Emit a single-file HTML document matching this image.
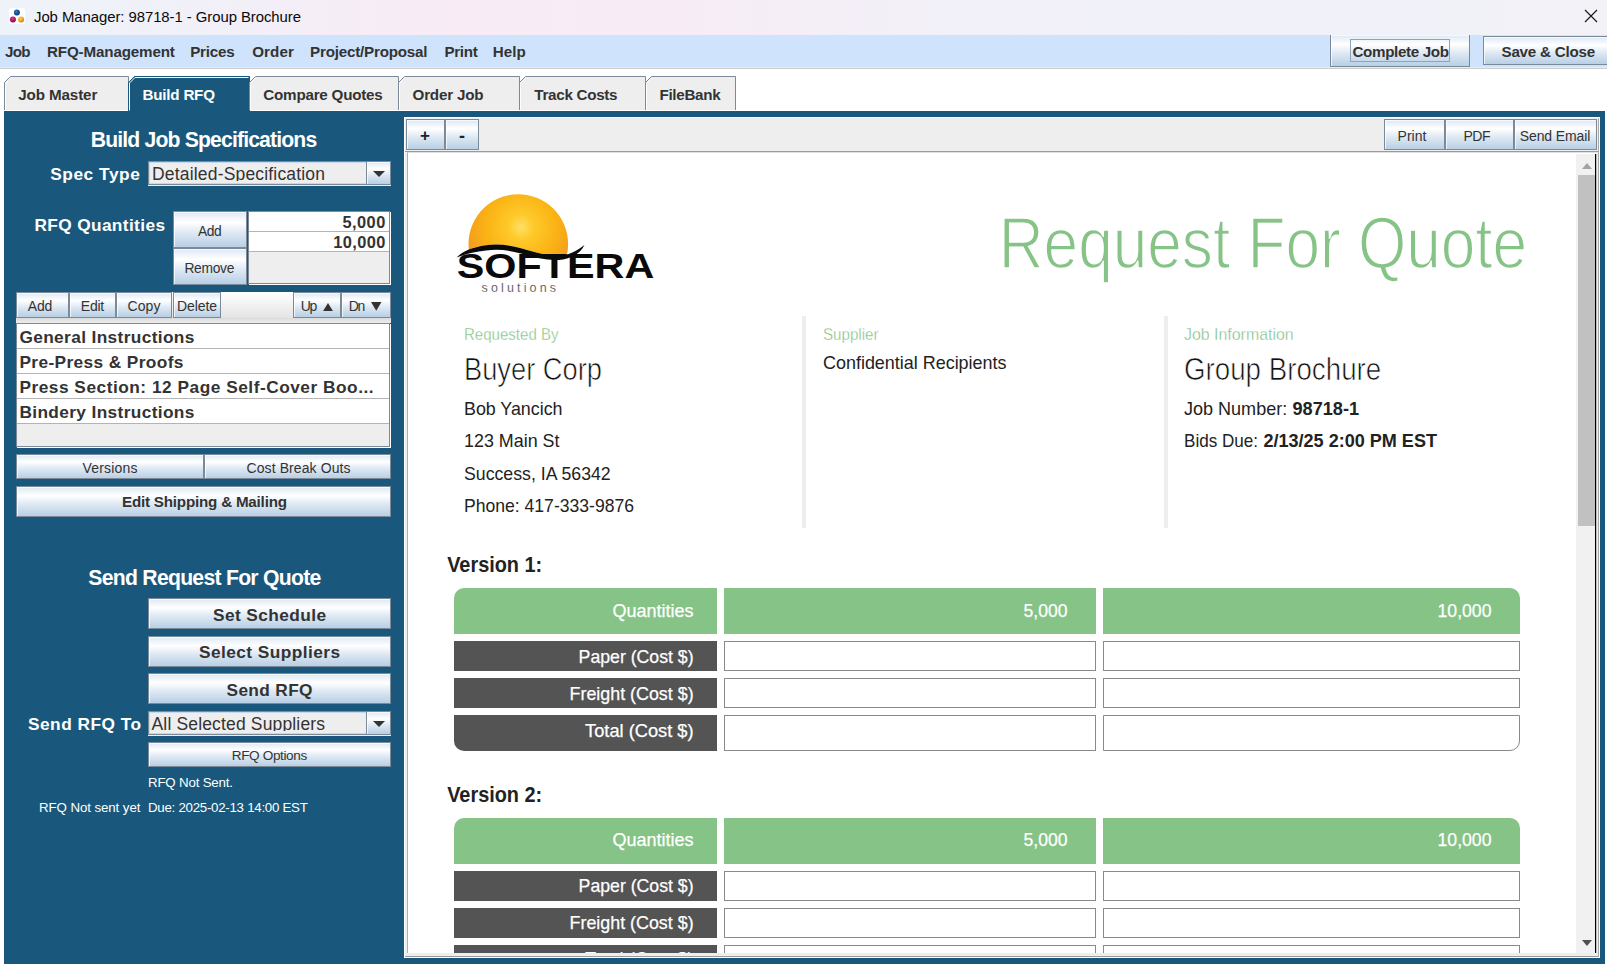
<!DOCTYPE html>
<html><head><meta charset="utf-8"><title>Job Manager</title>
<style>
html,body{margin:0;padding:0;}
body{width:1607px;height:967px;overflow:hidden;background:#fff;position:relative;font-family:"Liberation Sans",sans-serif;}
div{position:absolute;}
.b{background:linear-gradient(#dde8f3 0%,#ffffff 30%,#dde8f3 60%,#b8cfe5 100%);border:1px solid #7a8a99;box-sizing:border-box;box-shadow:inset 1px 1px 0 rgba(255,255,255,0.7);}
svg text{font-family:"Liberation Sans",sans-serif;}
#tx{position:absolute;left:0;top:0;pointer-events:none;}
</style></head><body>
<div class="" style="left:0px;top:0px;width:1607px;height:35px;background:linear-gradient(90deg,#eef3f9 0%,#f1f0f8 12%,#f8ebf5 28%,#f7ecf5 42%,#f2f0f8 58%,#f0f1f9 75%,#f1f1f8 92%,#f3f2f7 100%);"></div>
<svg style="position:absolute;left:9px;top:8px" width="16" height="16" viewBox="0 0 16 16">
<defs>
<radialGradient id="gb" cx="0.4" cy="0.35" r="0.7"><stop offset="0" stop-color="#2f7fc0"/><stop offset="0.6" stop-color="#14508f"/><stop offset="1" stop-color="#0c3566"/></radialGradient>
<radialGradient id="gm" cx="0.4" cy="0.35" r="0.7"><stop offset="0" stop-color="#d63a8e"/><stop offset="0.6" stop-color="#b0126b"/><stop offset="1" stop-color="#6d0a45"/></radialGradient>
<radialGradient id="go" cx="0.4" cy="0.35" r="0.7"><stop offset="0" stop-color="#ffc84a"/><stop offset="0.6" stop-color="#f4a422"/><stop offset="1" stop-color="#b97a1c"/></radialGradient>
</defs>
<rect x="0" y="0" width="16" height="16" rx="3" fill="#ffffff"/>
<circle cx="7.9" cy="4.5" r="3" fill="url(#gb)"/>
<circle cx="3.9" cy="11.4" r="3" fill="url(#gm)"/>
<circle cx="12.1" cy="11.4" r="3" fill="url(#go)"/>
</svg>
<svg style="position:absolute;left:1584px;top:9px" width="14" height="14" viewBox="0 0 14 14"><path d="M1 1 L13 13 M13 1 L1 13" stroke="#1a1a1a" stroke-width="1.2" fill="none"/></svg>
<div class="" style="left:0px;top:35px;width:1607px;height:32px;background:#cfe3fc;"></div>
<div class="" style="left:0px;top:67px;width:1607px;height:1px;background:#ebebeb;"></div>
<div class="" style="left:0px;top:68px;width:1607px;height:1px;background:#cdcdcd;"></div>
<div class="b" style="left:1330px;top:35px;width:140px;height:32px;border-top:none;"></div>
<div class="" style="left:1350px;top:39px;width:100px;height:23px;border:1px solid #8fa3bd;box-sizing:border-box;"></div>
<div class="b" style="left:1483px;top:36px;width:127px;height:29px;"></div>
<div class="" style="left:4px;top:110px;width:1601px;height:1px;background:#ffffff;"></div>
<svg style="position:absolute;left:0;top:70px" width="800" height="45" viewBox="0 70 800 45"><path d="M4.5 110 L4.5 82.5 L10.5 76.5 L128.5 76.5 L128.5 110" fill="#eeeeee" stroke="#7a8a99" stroke-width="1"/><path d="M5.5 110 L5.5 83.5 L8.5 80.5" fill="none" stroke="#ffffff" stroke-width="1" opacity="0.9"/><path d="M128.5 111 L128.5 82.5 L134.5 76.5 L249.5 76.5 L249.5 111 Z" fill="#19587c" stroke="#19587c" stroke-width="1"/><path d="M129.5 110.5 L129.5 83 L135 77.5 L248.5 77.5" fill="none" stroke="#ffffff" stroke-width="1"/><path d="M249.5 110 L249.5 82.5 L255.5 76.5 L398.5 76.5 L398.5 110" fill="#eeeeee" stroke="#7a8a99" stroke-width="1"/><path d="M250.5 110 L250.5 83.5 L253.5 80.5" fill="none" stroke="#ffffff" stroke-width="1" opacity="0.9"/><path d="M398.5 110 L398.5 82.5 L404.5 76.5 L519.5 76.5 L519.5 110" fill="#eeeeee" stroke="#7a8a99" stroke-width="1"/><path d="M399.5 110 L399.5 83.5 L402.5 80.5" fill="none" stroke="#ffffff" stroke-width="1" opacity="0.9"/><path d="M519.5 110 L519.5 82.5 L525.5 76.5 L645.5 76.5 L645.5 110" fill="#eeeeee" stroke="#7a8a99" stroke-width="1"/><path d="M520.5 110 L520.5 83.5 L523.5 80.5" fill="none" stroke="#ffffff" stroke-width="1" opacity="0.9"/><path d="M645.5 110 L645.5 82.5 L651.5 76.5 L735.5 76.5 L735.5 110" fill="#eeeeee" stroke="#7a8a99" stroke-width="1"/><path d="M646.5 110 L646.5 83.5 L649.5 80.5" fill="none" stroke="#ffffff" stroke-width="1" opacity="0.9"/></svg>
<div class="" style="left:4px;top:111px;width:1601px;height:853px;background:#19587c;"></div>
<div class="" style="left:148px;top:161px;width:243px;height:24px;background:#eeeeee;border:1px solid #7a8a99;box-sizing:border-box;box-shadow:0 1px 0 #e8eef6, inset 1px 1px 0 #c9d9ea, inset -1px -1px 0 #c9d9ea;"></div>
<div class="" style="left:366px;top:161px;width:25px;height:24px;background:linear-gradient(#dde8f3 0%,#ffffff 30%,#dde8f3 60%,#b8cfe5 100%);border:1px solid #7a8a99;box-sizing:border-box;box-shadow:inset 1px 1px 0 rgba(255,255,255,0.7);"></div>
<svg style="position:absolute;left:373px;top:171.0px" width="12" height="6" viewBox="0 0 12 6"><path d="M0 0 L12 0 L6 6 Z" fill="#333"/></svg>
<svg style="position:absolute;left:149px;top:163px" width="216" height="18" viewBox="149 163 216 18"><text x="152" y="180" font-size="17.5" fill="#333" textLength="173" lengthAdjust="spacing">Detailed-Specification</text></svg>
<div class="b" style="left:173px;top:211px;width:74px;height:37px;"></div>
<div class="b" style="left:173px;top:248px;width:74px;height:37px;"></div>
<div class="" style="left:248px;top:211px;width:142px;height:73px;background:#eeeeee;border:1px solid #7a8a99;box-sizing:border-box;box-shadow:1px 1px 0 #fff;"></div>
<div class="" style="left:249px;top:212px;width:140px;height:19px;background:#fff;border-bottom:1px solid #b4b4b4;"></div>
<div class="" style="left:249px;top:232px;width:140px;height:19px;background:#fff;border-bottom:1px solid #b4b4b4;"></div>
<div class="" style="left:16px;top:292px;width:375px;height:26px;background:linear-gradient(#ffffff,#e4e4e4);"></div>
<div class="" style="left:16px;top:318px;width:375px;height:5px;background:linear-gradient(#dadada,#eeeeee);"></div>
<div class="b" style="left:16px;top:292px;width:53px;height:26px;"></div>
<div class="b" style="left:69px;top:292px;width:47px;height:26px;"></div>
<div class="b" style="left:116px;top:292px;width:56px;height:26px;"></div>
<div class="b" style="left:173px;top:292px;width:48px;height:26px;"></div>
<div class="b" style="left:293px;top:292px;width:48px;height:26px;"></div>
<div class="b" style="left:341px;top:292px;width:50px;height:26px;"></div>
<svg style="position:absolute;left:322.5px;top:302.5px" width="10" height="8.2" viewBox="0 0 10 8.2"><path d="M5 0 L10 8.2 L0 8.2 Z" fill="#333"/></svg>
<svg style="position:absolute;left:371px;top:302px" width="10.5" height="8.7" viewBox="0 0 10.5 8.7"><path d="M0 0 L10.5 0 L5.25 8.7 Z" fill="#333"/></svg>
<div class="" style="left:16px;top:323px;width:374px;height:124px;background:#eeeeee;border:1px solid #7a8a99;box-sizing:border-box;box-shadow:1px 1px 0 #fff;"></div>
<div class="" style="left:17px;top:324px;width:372px;height:24px;background:#fff;border-bottom:1px solid #b4b4b4;"></div>
<div class="" style="left:17px;top:349px;width:372px;height:24px;background:#fff;border-bottom:1px solid #b4b4b4;"></div>
<div class="" style="left:17px;top:374px;width:372px;height:24px;background:#fff;border-bottom:1px solid #b4b4b4;"></div>
<div class="" style="left:17px;top:399px;width:372px;height:24px;background:#fff;border-bottom:1px solid #b4b4b4;"></div>
<div class="b" style="left:16px;top:454px;width:188px;height:25px;"></div>
<div class="b" style="left:204px;top:454px;width:187px;height:25px;"></div>
<div class="b" style="left:16px;top:486px;width:375px;height:31px;"></div>
<div class="b" style="left:148px;top:598px;width:243px;height:31px;"></div>
<div class="b" style="left:148px;top:636px;width:243px;height:31px;"></div>
<div class="b" style="left:148px;top:673px;width:243px;height:31px;"></div>
<div class="" style="left:148px;top:711px;width:243px;height:24px;background:#eeeeee;border:1px solid #7a8a99;box-sizing:border-box;box-shadow:0 1px 0 #e8eef6, inset 1px 1px 0 #c9d9ea, inset -1px -1px 0 #c9d9ea;"></div>
<div class="" style="left:366px;top:711px;width:25px;height:24px;background:linear-gradient(#dde8f3 0%,#ffffff 30%,#dde8f3 60%,#b8cfe5 100%);border:1px solid #7a8a99;box-sizing:border-box;box-shadow:inset 1px 1px 0 rgba(255,255,255,0.7);"></div>
<svg style="position:absolute;left:373px;top:721.0px" width="12" height="6" viewBox="0 0 12 6"><path d="M0 0 L12 0 L6 6 Z" fill="#333"/></svg>
<svg style="position:absolute;left:149px;top:712px" width="216" height="19" viewBox="149 712 216 19"><text x="151.5" y="730" font-size="17.5" fill="#333" textLength="173.5" lengthAdjust="spacing">All Selected Suppliers</text></svg>
<div class="b" style="left:148px;top:742px;width:243px;height:25px;"></div>
<div class="" style="left:404px;top:117px;width:1196px;height:841px;background:#eeeeee;border:1px solid #fff;box-sizing:border-box;"></div>
<div class="b" style="left:406px;top:119px;width:39px;height:31px;"></div>
<div class="b" style="left:445px;top:119px;width:34px;height:31px;"></div>
<div class="b" style="left:1384px;top:119px;width:61px;height:31px;"></div>
<div class="b" style="left:1445px;top:119px;width:69px;height:31px;"></div>
<div class="b" style="left:1514px;top:119px;width:83px;height:31px;"></div>
<div class="" style="left:405px;top:151px;width:1194px;height:1px;background:#9a9a9a;"></div>
<div class="" style="left:407px;top:152px;width:1190px;height:801px;background:#fff;border-left:1px solid #b0b0b0;border-top:1px solid #e0e0e0;box-sizing:border-box;"></div>
<div class="" style="left:405px;top:956px;width:1194px;height:1px;background:#9a9a9a;"></div>
<div class="" style="left:1576px;top:154px;width:19px;height:799px;background:#f1f1f1;"></div>
<div class="" style="left:1578px;top:175px;width:17px;height:351px;background:#c1c1c1;"></div>
<div class="" style="left:1595px;top:154px;width:1px;height:799px;background:#000;"></div>
<div class="" style="left:1596px;top:154px;width:1px;height:799px;background:rgba(0,0,0,0.25);"></div>
<div class="" style="left:1597.5px;top:118px;width:1px;height:839px;background:#aaa;"></div>
<svg style="position:absolute;left:1582px;top:162.5px" width="10" height="6" viewBox="0 0 10 6"><path d="M5 0 L10 6 L0 6 Z" fill="#a3a3a3"/></svg>
<svg style="position:absolute;left:1582px;top:939.7px" width="10" height="6" viewBox="0 0 10 6"><path d="M0 0 L10 0 L5 6 Z" fill="#505050"/></svg>
<div class="" style="left:802px;top:316px;width:4px;height:212px;background:#eeeeee;"></div>
<div class="" style="left:1164px;top:316px;width:4px;height:212px;background:#eeeeee;"></div>
<div class="" style="left:454px;top:588px;width:263px;height:46px;background:#86c386;border-top-left-radius:10px;"></div>
<div class="" style="left:724px;top:588px;width:372px;height:46px;background:#86c386;"></div>
<div class="" style="left:1103px;top:588px;width:417px;height:46px;background:#86c386;border-top-right-radius:10px;"></div>
<div class="" style="left:454px;top:641px;width:263px;height:30px;background:#545454;"></div>
<div class="" style="left:724px;top:641px;width:372px;height:30px;background:#fff;border:1px solid #8a8a8a;box-sizing:border-box;"></div>
<div class="" style="left:1103px;top:641px;width:417px;height:30px;background:#fff;border:1px solid #8a8a8a;box-sizing:border-box;"></div>
<div class="" style="left:454px;top:678px;width:263px;height:30px;background:#545454;"></div>
<div class="" style="left:724px;top:678px;width:372px;height:30px;background:#fff;border:1px solid #8a8a8a;box-sizing:border-box;"></div>
<div class="" style="left:1103px;top:678px;width:417px;height:30px;background:#fff;border:1px solid #8a8a8a;box-sizing:border-box;"></div>
<div class="" style="left:454px;top:715px;width:263px;height:36px;background:#545454;border-bottom-left-radius:10px;"></div>
<div class="" style="left:724px;top:715px;width:372px;height:36px;background:#fff;border:1px solid #8a8a8a;box-sizing:border-box;"></div>
<div class="" style="left:1103px;top:715px;width:417px;height:36px;background:#fff;border:1px solid #8a8a8a;box-sizing:border-box;border-bottom-right-radius:10px;"></div>
<div class="" style="left:454px;top:818px;width:263px;height:46px;background:#86c386;border-top-left-radius:10px;"></div>
<div class="" style="left:724px;top:818px;width:372px;height:46px;background:#86c386;"></div>
<div class="" style="left:1103px;top:818px;width:417px;height:46px;background:#86c386;border-top-right-radius:10px;"></div>
<div class="" style="left:454px;top:871px;width:263px;height:30px;background:#545454;"></div>
<div class="" style="left:724px;top:871px;width:372px;height:30px;background:#fff;border:1px solid #8a8a8a;box-sizing:border-box;"></div>
<div class="" style="left:1103px;top:871px;width:417px;height:30px;background:#fff;border:1px solid #8a8a8a;box-sizing:border-box;"></div>
<div class="" style="left:454px;top:908px;width:263px;height:30px;background:#545454;"></div>
<div class="" style="left:724px;top:908px;width:372px;height:30px;background:#fff;border:1px solid #8a8a8a;box-sizing:border-box;"></div>
<div class="" style="left:1103px;top:908px;width:417px;height:30px;background:#fff;border:1px solid #8a8a8a;box-sizing:border-box;"></div>
<div class="" style="left:454px;top:945px;width:263px;height:8px;background:#545454;"></div>
<div class="" style="left:724px;top:945px;width:372px;height:8px;background:#fff;border:1px solid #8a8a8a;box-sizing:border-box;border-bottom:none;"></div>
<div class="" style="left:1103px;top:945px;width:417px;height:8px;background:#fff;border:1px solid #8a8a8a;box-sizing:border-box;border-bottom:none;"></div>
<svg style="position:absolute;left:454px;top:945px" width="263" height="8" viewBox="454 945 263 8"><text x="693.6" y="965.3" font-size="18.6" fill="#fff" text-anchor="end" textLength="108.5" lengthAdjust="spacingAndGlyphs">Total (Cost $)</text></svg>
<svg style="position:absolute;left:450px;top:188px" width="215" height="112" viewBox="450 188 215 112">
<defs><radialGradient id="sun" gradientUnits="userSpaceOnUse" cx="521" cy="227" r="52"><stop offset="0" stop-color="#ffe066"/><stop offset="0.25" stop-color="#fec92a"/><stop offset="0.65" stop-color="#fbb415"/><stop offset="1" stop-color="#f5a01c"/></radialGradient>
<clipPath id="sc"><path d="M440 180 H600 V246 L584 245.5 C578 250 572 254 562 255.5 C550 257 538 253 522 248.5 C508 244.5 496 243.5 484 245.5 C472 247.5 463 251 457 256 L440 257 Z"/></clipPath></defs>
<circle cx="518.3" cy="244" r="49.8" fill="url(#sun)" clip-path="url(#sc)"/>
<path d="M456.5 257.5 C463 251 472 247.5 484 245.5 C496 243.5 508 244.5 522 248.5 C538 253 550 257 562 255.5 C572 254 578 250 584.5 245 C581 252 574 257.5 563 259.5 C550 261.5 536 258 521 253.5 C508 249.8 497 249 486 250.5 C474 252 464 254.5 456.5 257.5 Z" fill="#0a0a0a"/>
<text x="456.8" y="278" font-size="34.4" font-weight="700" fill="#0a0a0a" textLength="197.5" lengthAdjust="spacingAndGlyphs">SOFTERA</text>
<text x="481.5" y="291.6" font-size="12.5" fill="#3a3a3a" stroke="#fff" stroke-width="0.2" textLength="74.5" lengthAdjust="spacing">solutions</text>
</svg>
<svg id="tx" width="1607" height="967" viewBox="0 0 1607 967">
<text x="34" y="21.5" font-size="14.9" font-weight="400" fill="#0a0a0a" text-anchor="start" textLength="267" lengthAdjust="spacing">Job Manager: 98718-1 - Group Brochure</text>
<text x="5.0" y="56.6" font-size="15.2" font-weight="700" fill="#333" text-anchor="start" textLength="25.5" lengthAdjust="spacing">Job</text>
<text x="47.0" y="56.6" font-size="15.2" font-weight="700" fill="#333" text-anchor="start" textLength="127.9" lengthAdjust="spacing">RFQ-Management</text>
<text x="190.2" y="56.6" font-size="15.2" font-weight="700" fill="#333" text-anchor="start" textLength="44.5" lengthAdjust="spacing">Prices</text>
<text x="252.2" y="56.6" font-size="15.2" font-weight="700" fill="#333" text-anchor="start" textLength="41.6" lengthAdjust="spacing">Order</text>
<text x="310.1" y="56.6" font-size="15.2" font-weight="700" fill="#333" text-anchor="start" textLength="117.4" lengthAdjust="spacing">Project/Proposal</text>
<text x="444.40000000000003" y="56.6" font-size="15.2" font-weight="700" fill="#333" text-anchor="start" textLength="33.4" lengthAdjust="spacing">Print</text>
<text x="492.8" y="56.6" font-size="15.2" font-weight="700" fill="#333" text-anchor="start" textLength="32.9" lengthAdjust="spacing">Help</text>
<text x="1352.5" y="56.7" font-size="15.2" font-weight="700" fill="#333" text-anchor="start" textLength="96.5" lengthAdjust="spacing">Complete Job</text>
<text x="1501.5" y="56.7" font-size="15.2" font-weight="700" fill="#333" text-anchor="start" textLength="93.6" lengthAdjust="spacing">Save &amp; Close</text>
<text x="18.3" y="99.8" font-size="15.2" font-weight="700" fill="#333" text-anchor="start" textLength="79" lengthAdjust="spacing">Job Master</text>
<text x="142.5" y="99.8" font-size="15.2" font-weight="700" fill="#fff" text-anchor="start" textLength="72.5" lengthAdjust="spacing">Build RFQ</text>
<text x="263.3" y="99.8" font-size="15.2" font-weight="700" fill="#333" text-anchor="start" textLength="119.5" lengthAdjust="spacing">Compare Quotes</text>
<text x="412.5" y="99.8" font-size="15.2" font-weight="700" fill="#333" text-anchor="start" textLength="71.1" lengthAdjust="spacing">Order Job</text>
<text x="534.3" y="99.8" font-size="15.2" font-weight="700" fill="#333" text-anchor="start" textLength="83.2" lengthAdjust="spacing">Track Costs</text>
<text x="659.4" y="99.8" font-size="15.2" font-weight="700" fill="#333" text-anchor="start" textLength="61.3" lengthAdjust="spacing">FileBank</text>
<text x="204" y="147" font-size="21.2" font-weight="700" fill="#fff" text-anchor="middle" textLength="226.5" lengthAdjust="spacing">Build Job Specifications</text>
<text x="50.3" y="180.2" font-size="17.3" font-weight="700" fill="#fff" text-anchor="start" textLength="89.5" lengthAdjust="spacing">Spec Type</text>
<text x="34.4" y="230.7" font-size="17.3" font-weight="700" fill="#fff" text-anchor="start" textLength="130.6" lengthAdjust="spacing">RFQ Quantities</text>
<text x="209.8" y="235.7" font-size="13.8" font-weight="400" fill="#333" text-anchor="middle" textLength="23.6" lengthAdjust="spacing">Add</text>
<text x="209.4" y="272.6" font-size="13.8" font-weight="400" fill="#333" text-anchor="middle" textLength="50" lengthAdjust="spacing">Remove</text>
<text x="385.3" y="227.7" font-size="16.4" font-weight="700" fill="#333" text-anchor="end" textLength="42.8" lengthAdjust="spacing">5,000</text>
<text x="385.3" y="247.7" font-size="16.4" font-weight="700" fill="#333" text-anchor="end" textLength="52.1" lengthAdjust="spacing">10,000</text>
<text x="40" y="311" font-size="14" font-weight="400" fill="#333" text-anchor="middle" textLength="24.5" lengthAdjust="spacing">Add</text>
<text x="92.5" y="311" font-size="14" font-weight="400" fill="#333" text-anchor="middle" textLength="23.5" lengthAdjust="spacing">Edit</text>
<text x="144" y="311" font-size="14" font-weight="400" fill="#333" text-anchor="middle" textLength="33" lengthAdjust="spacing">Copy</text>
<text x="197" y="311" font-size="14" font-weight="400" fill="#333" text-anchor="middle" textLength="40" lengthAdjust="spacing">Delete</text>
<text x="309" y="311" font-size="14" font-weight="400" fill="#333" text-anchor="middle" textLength="16.5" lengthAdjust="spacing">Up</text>
<text x="357" y="311" font-size="14" font-weight="400" fill="#333" text-anchor="middle" textLength="16.5" lengthAdjust="spacing">Dn</text>
<text x="19.4" y="342.8" font-size="17.3" font-weight="700" fill="#333" text-anchor="start" textLength="175" lengthAdjust="spacing">General Instructions</text>
<text x="19.4" y="367.8" font-size="17.3" font-weight="700" fill="#333" text-anchor="start" textLength="164" lengthAdjust="spacing">Pre-Press &amp; Proofs</text>
<text x="19.4" y="392.8" font-size="17.3" font-weight="700" fill="#333" text-anchor="start" textLength="354.2" lengthAdjust="spacing">Press Section: 12 Page Self-Cover Boo...</text>
<text x="19.4" y="417.8" font-size="17.3" font-weight="700" fill="#333" text-anchor="start" textLength="175" lengthAdjust="spacing">Bindery Instructions</text>
<text x="110" y="472.5" font-size="14" font-weight="400" fill="#333" text-anchor="middle" textLength="55" lengthAdjust="spacing">Versions</text>
<text x="298.5" y="472.5" font-size="14" font-weight="400" fill="#333" text-anchor="middle" textLength="104" lengthAdjust="spacing">Cost Break Outs</text>
<text x="204.5" y="507" font-size="15.2" font-weight="700" fill="#333" text-anchor="middle" textLength="165" lengthAdjust="spacing">Edit Shipping &amp; Mailing</text>
<text x="204.8" y="584.7" font-size="21.2" font-weight="700" fill="#fff" text-anchor="middle" textLength="233" lengthAdjust="spacing">Send Request For Quote</text>
<text x="269.5" y="620.5" font-size="17.3" font-weight="700" fill="#333" text-anchor="middle" textLength="113" lengthAdjust="spacing">Set Schedule</text>
<text x="269.5" y="658" font-size="17.3" font-weight="700" fill="#333" text-anchor="middle" textLength="141" lengthAdjust="spacing">Select Suppliers</text>
<text x="269.5" y="695.5" font-size="17.3" font-weight="700" fill="#333" text-anchor="middle" textLength="86" lengthAdjust="spacing">Send RFQ</text>
<text x="28" y="730" font-size="17.3" font-weight="700" fill="#fff" text-anchor="start" textLength="113" lengthAdjust="spacing">Send RFQ To</text>
<text x="269.5" y="760" font-size="13.6" font-weight="400" fill="#333" text-anchor="middle" textLength="75.5" lengthAdjust="spacing">RFQ Options</text>
<text x="148" y="787.4" font-size="13.3" font-weight="400" fill="#fff" text-anchor="start" textLength="85" lengthAdjust="spacing">RFQ Not Sent.</text>
<text x="39" y="812" font-size="13.3" font-weight="400" fill="#fff" text-anchor="start" textLength="101.4" lengthAdjust="spacing">RFQ Not sent yet</text>
<text x="148" y="812" font-size="13.3" font-weight="400" fill="#fff" text-anchor="start" textLength="159.8" lengthAdjust="spacing">Due: 2025-02-13 14:00 EST</text>
<text x="425" y="141.2" font-size="17" font-weight="700" fill="#222" text-anchor="middle">+</text>
<text x="462" y="142.3" font-size="18" font-weight="700" fill="#222" text-anchor="middle">-</text>
<text x="1412" y="140.7" font-size="14" font-weight="400" fill="#333" text-anchor="middle" textLength="29" lengthAdjust="spacing">Print</text>
<text x="1477" y="140.7" font-size="14" font-weight="400" fill="#333" text-anchor="middle" textLength="27" lengthAdjust="spacing">PDF</text>
<text x="1555" y="140.7" font-size="14" font-weight="400" fill="#333" text-anchor="middle" textLength="70.5" lengthAdjust="spacing">Send Email</text>
<text x="1527.2" y="267.8" font-size="73" font-weight="400" fill="#86c386" text-anchor="end" textLength="528.5" lengthAdjust="spacingAndGlyphs" stroke="#fff" stroke-width="1.6" paint-order="fill stroke">Request For Quote</text>
<text x="464" y="340.0" font-size="17" font-weight="400" fill="#7fc07f" text-anchor="start" textLength="94.5" lengthAdjust="spacingAndGlyphs" stroke="#fff" stroke-width="0.35">Requested By</text>
<text x="464" y="380.0" font-size="31.2" font-weight="400" fill="#111" text-anchor="start" textLength="138" lengthAdjust="spacingAndGlyphs" stroke="#fff" stroke-width="0.7">Buyer Corp</text>
<text x="464" y="415" font-size="18.6" font-weight="400" fill="#222" text-anchor="start" textLength="98.5" lengthAdjust="spacingAndGlyphs">Bob Yancich</text>
<text x="464" y="447.2" font-size="18.6" font-weight="400" fill="#222" text-anchor="start" textLength="95.5" lengthAdjust="spacingAndGlyphs">123 Main St</text>
<text x="464" y="480.2" font-size="18.6" font-weight="400" fill="#222" text-anchor="start" textLength="146.7" lengthAdjust="spacingAndGlyphs">Success, IA 56342</text>
<text x="464" y="512.4" font-size="18.6" font-weight="400" fill="#222" text-anchor="start" textLength="170" lengthAdjust="spacingAndGlyphs">Phone: 417-333-9876</text>
<text x="823" y="340.0" font-size="17" font-weight="400" fill="#7fc07f" text-anchor="start" textLength="55.5" lengthAdjust="spacingAndGlyphs" stroke="#fff" stroke-width="0.35">Supplier</text>
<text x="823" y="369.3" font-size="18.6" font-weight="400" fill="#222" text-anchor="start" textLength="183.5" lengthAdjust="spacingAndGlyphs">Confidential Recipients</text>
<text x="1184" y="340.0" font-size="17" font-weight="400" fill="#7fc07f" text-anchor="start" textLength="109.7" lengthAdjust="spacingAndGlyphs" stroke="#fff" stroke-width="0.35">Job Information</text>
<text x="1184" y="380.0" font-size="31.2" font-weight="400" fill="#111" text-anchor="start" textLength="197.2" lengthAdjust="spacingAndGlyphs" stroke="#fff" stroke-width="0.7">Group Brochure</text>
<text x="1184" y="415" font-size="18.6" font-weight="400" fill="#222" text-anchor="start" textLength="103.2" lengthAdjust="spacingAndGlyphs">Job Number:</text>
<text x="1292.5" y="415" font-size="18.6" font-weight="700" fill="#222" text-anchor="start" textLength="66.5" lengthAdjust="spacingAndGlyphs">98718-1</text>
<text x="1184" y="447.2" font-size="18.6" font-weight="400" fill="#222" text-anchor="start" textLength="74" lengthAdjust="spacingAndGlyphs">Bids Due:</text>
<text x="1263.4" y="447.2" font-size="18.6" font-weight="700" fill="#222" text-anchor="start" textLength="173.6" lengthAdjust="spacingAndGlyphs">2/13/25 2:00 PM EST</text>
<text x="447.2" y="572.2" font-size="21.5" font-weight="700" fill="#222" text-anchor="start" textLength="95" lengthAdjust="spacingAndGlyphs">Version 1:</text>
<text x="693.6" y="616.7" font-size="18.6" font-weight="400" fill="#fff" text-anchor="end" textLength="81" lengthAdjust="spacingAndGlyphs" stroke="#fff" stroke-width="0.25">Quantities</text>
<text x="1067.5" y="616.7" font-size="18.6" font-weight="400" fill="#fff" text-anchor="end" textLength="44" lengthAdjust="spacingAndGlyphs" stroke="#fff" stroke-width="0.25">5,000</text>
<text x="1491.5" y="616.7" font-size="18.6" font-weight="400" fill="#fff" text-anchor="end" textLength="54" lengthAdjust="spacingAndGlyphs" stroke="#fff" stroke-width="0.25">10,000</text>
<text x="693.6" y="662.6" font-size="18.6" font-weight="400" fill="#fff" text-anchor="end" textLength="115" lengthAdjust="spacingAndGlyphs" stroke="#fff" stroke-width="0.25">Paper (Cost $)</text>
<text x="693.6" y="699.6" font-size="18.6" font-weight="400" fill="#fff" text-anchor="end" textLength="124" lengthAdjust="spacingAndGlyphs" stroke="#fff" stroke-width="0.25">Freight (Cost $)</text>
<text x="693.6" y="736.6" font-size="18.6" font-weight="400" fill="#fff" text-anchor="end" textLength="108.5" lengthAdjust="spacingAndGlyphs" stroke="#fff" stroke-width="0.25">Total (Cost $)</text>
<text x="447.2" y="802.4" font-size="21.5" font-weight="700" fill="#222" text-anchor="start" textLength="95" lengthAdjust="spacingAndGlyphs">Version 2:</text>
<text x="693.6" y="846.0" font-size="18.6" font-weight="400" fill="#fff" text-anchor="end" textLength="81" lengthAdjust="spacingAndGlyphs" stroke="#fff" stroke-width="0.25">Quantities</text>
<text x="1067.5" y="846.0" font-size="18.6" font-weight="400" fill="#fff" text-anchor="end" textLength="44" lengthAdjust="spacingAndGlyphs" stroke="#fff" stroke-width="0.25">5,000</text>
<text x="1491.5" y="846.0" font-size="18.6" font-weight="400" fill="#fff" text-anchor="end" textLength="54" lengthAdjust="spacingAndGlyphs" stroke="#fff" stroke-width="0.25">10,000</text>
<text x="693.6" y="891.9" font-size="18.6" font-weight="400" fill="#fff" text-anchor="end" textLength="115" lengthAdjust="spacingAndGlyphs" stroke="#fff" stroke-width="0.25">Paper (Cost $)</text>
<text x="693.6" y="928.9" font-size="18.6" font-weight="400" fill="#fff" text-anchor="end" textLength="124" lengthAdjust="spacingAndGlyphs" stroke="#fff" stroke-width="0.25">Freight (Cost $)</text>
</svg>
</body></html>
